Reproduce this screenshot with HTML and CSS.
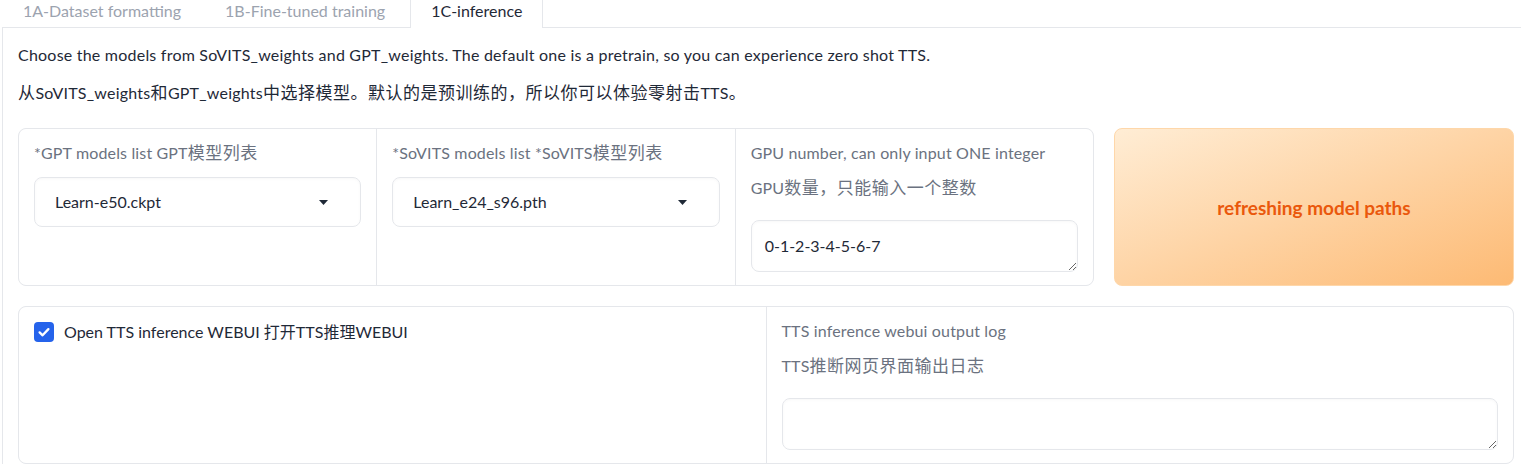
FILE: index.html
```html
<!DOCTYPE html>
<html lang="en">
<head>
<meta charset="utf-8">
<title>1C-inference</title>
<link rel="stylesheet" href="styles.css">
</head>
<body>
<div class="app">
  <div class="tabs">
    <div class="tab">1A-Dataset formatting</div>
    <div class="tab tab-wide">1B-Fine-tuned training</div>
    <div class="tab selected">1C-inference</div>
  </div>
  <div class="panel">
    <p class="md md-en">Choose the models from SoVITS_weights and GPT_weights. The default one is a pretrain, so you can experience zero shot TTS.</p>
    <p class="md md-zh"><span class="zh">从</span>SoVITS_weights<span class="zh">和</span>GPT_weights<span class="zh">中选择模型。默认的是预训练的，所以你可以体验零射击</span>TTS<span class="zh">。</span></p>

    <div class="row row-models">
      <div class="group group-3">
        <div class="cell">
          <div class="label">*GPT models list GPT<span class="zh">模型列表</span></div>
          <div class="dropdown">
            <span class="dd-value">Learn-e50.ckpt</span>
            <svg class="dd-arrow" width="9" height="5" viewBox="0 0 9 5"><polygon points="0,0 9,0 4.5,5" fill="#1f2937"/></svg>
          </div>
        </div>
        <div class="cell">
          <div class="label">*SoVITS models list *SoVITS<span class="zh">模型列表</span></div>
          <div class="dropdown">
            <span class="dd-value">Learn_e24_s96.pth</span>
            <svg class="dd-arrow" width="9" height="5" viewBox="0 0 9 5"><polygon points="0,0 9,0 4.5,5" fill="#1f2937"/></svg>
          </div>
        </div>
        <div class="cell">
          <div class="label">GPU number, can only input ONE integer</div>
          <div class="label info">GPU<span class="zh">数量，只能输入一个整数</span></div>
          <textarea class="textbox" rows="1">0-1-2-3-4-5-6-7</textarea>
        </div>
      </div>
      <button class="refresh" type="button">refreshing model paths</button>
    </div>

    <div class="row">
      <div class="group group-2">
        <div class="cell">
          <label class="check">
            <span class="check-box">
              <svg width="20" height="20" viewBox="0 0 20 20"><path d="M5.6 10.4 L8.6 13.3 L14.4 7.1" fill="none" stroke="#ffffff" stroke-width="2.3" stroke-linecap="round" stroke-linejoin="round"/></svg>
            </span>
            <span class="check-text">Open TTS inference WEBUI 打开TTS推理WEBUI</span>
          </label>
        </div>
        <div class="cell">
          <div class="label">TTS inference webui output log</div>
          <div class="label info">TTS<span class="zh">推断网页界面输出日志</span></div>
          <textarea class="textbox" rows="1"></textarea>
        </div>
      </div>
    </div>
  </div>
</div>
</body>
</html>
```

FILE: styles.css
```css
html, body {
  margin: 0;
  padding: 0;
  background: #ffffff;
  overflow: hidden;
}

body {
  font-family: Lato, "Noto Sans CJK SC", sans-serif;
  font-size: 16px;
  line-height: 24px;
  color: #1f2937;
}

.zh {
  font-family: "Noto Sans CJK SC", sans-serif;
  font-size: 17px;
  letter-spacing: 0.5px;
  line-height: 20px;
}

.app {
  padding-left: 2px;
  width: 1530px;
}

.tabs {
  display: flex;
  height: 27px;
  border-bottom: 1px solid #e5e7eb;
}

.tab {
  padding: 0 20px;
  line-height: 22px;
  height: 27px;
  border: 1px solid transparent;
  border-top: none;
  border-bottom: none;
  color: #9ca3af;
  white-space: nowrap;
}

.tab.tab-wide {
  padding: 0 24px 0 22px;
}

.tab.selected {
  color: #1f2937;
  background: #ffffff;
  border-left-color: #e5e7eb;
  border-right-color: #e5e7eb;
  height: 28px;
  margin-bottom: -1px;
}

.panel {
  border-left: 1px solid #e5e7eb;
  padding: 15px 15px 0 15px;
}

.md {
  margin: 0;
  letter-spacing: 0.22px;
}

.md-en {
  margin-bottom: 14px;
}

.md-zh {
  margin-bottom: 23px;
}

.row {
  display: flex;
  gap: 20px;
  width: 1496px;
}

.row-models {
  margin-bottom: 20px;
}

.group {
  display: grid;
  gap: 1px;
  background: #e5e7eb;
  border: 1px solid #e5e7eb;
  border-radius: 8px;
  overflow: hidden;
  flex: 1 1 auto;
}

.group-3 {
  grid-template-columns: 1fr 1fr 1fr;
  width: 1076px;
  flex: 0 0 1076px;
  box-sizing: border-box;
}

.group-2 {
  grid-template-columns: 1fr 1fr;
}

.cell {
  background: #ffffff;
  padding: 12px 15px 13px 15px;
  display: flex;
  flex-direction: column;
}

.label {
  color: #6b7280;
  white-space: nowrap;
  letter-spacing: 0.15px;
  height: 24px;
}

.label.info {
  margin-top: 11px;
}

.dropdown {
  margin-top: 12px;
  height: 50px;
  box-sizing: border-box;
  border: 1px solid #e5e7eb;
  border-radius: 8px;
  box-shadow: inset 0 1px 3px rgba(0, 0, 0, 0.03);
  display: flex;
  align-items: center;
  padding: 0 32px 0 20px;
}

.dd-value {
  flex: 1 1 auto;
}

.dd-arrow {
  display: block;
}

.textbox {
  margin-top: 20px;
  height: 52px;
  box-sizing: border-box;
  border: 1px solid #e5e7eb;
  border-radius: 8px;
  box-shadow: inset 0 1px 3px rgba(0, 0, 0, 0.03);
  padding: 13px 13px 0 13px;
  font-family: Lato, "Noto Sans CJK SC", sans-serif;
  font-size: 16px;
  line-height: 24px;
  color: #1f2937;
  background: #ffffff;
  resize: vertical;
  outline: none;
  width: 100%;
  display: block;
  overflow: hidden;
}

.refresh {
  flex: 0 0 400px;
  width: 400px;
  height: 158px;
  box-sizing: border-box;
  border: 1px solid #fed7aa;
  border-radius: 8px;
  background: linear-gradient(to bottom right, #ffedd5, #fdba74);
  color: #ea580c;
  font-family: Lato, "Noto Sans CJK SC", sans-serif;
  font-size: 19px;
  font-weight: 700;
  padding: 0;
  cursor: pointer;
}

.check {
  display: flex;
  align-items: center;
  gap: 10px;
  margin-top: 1px;
}

.check-box {
  width: 20px;
  height: 20px;
  border-radius: 4px;
  background: #2563eb;
  display: block;
  flex: 0 0 20px;
}

.check-box svg {
  display: block;
}

.check-text {
  color: #1f2937;
  white-space: nowrap;
}
```
